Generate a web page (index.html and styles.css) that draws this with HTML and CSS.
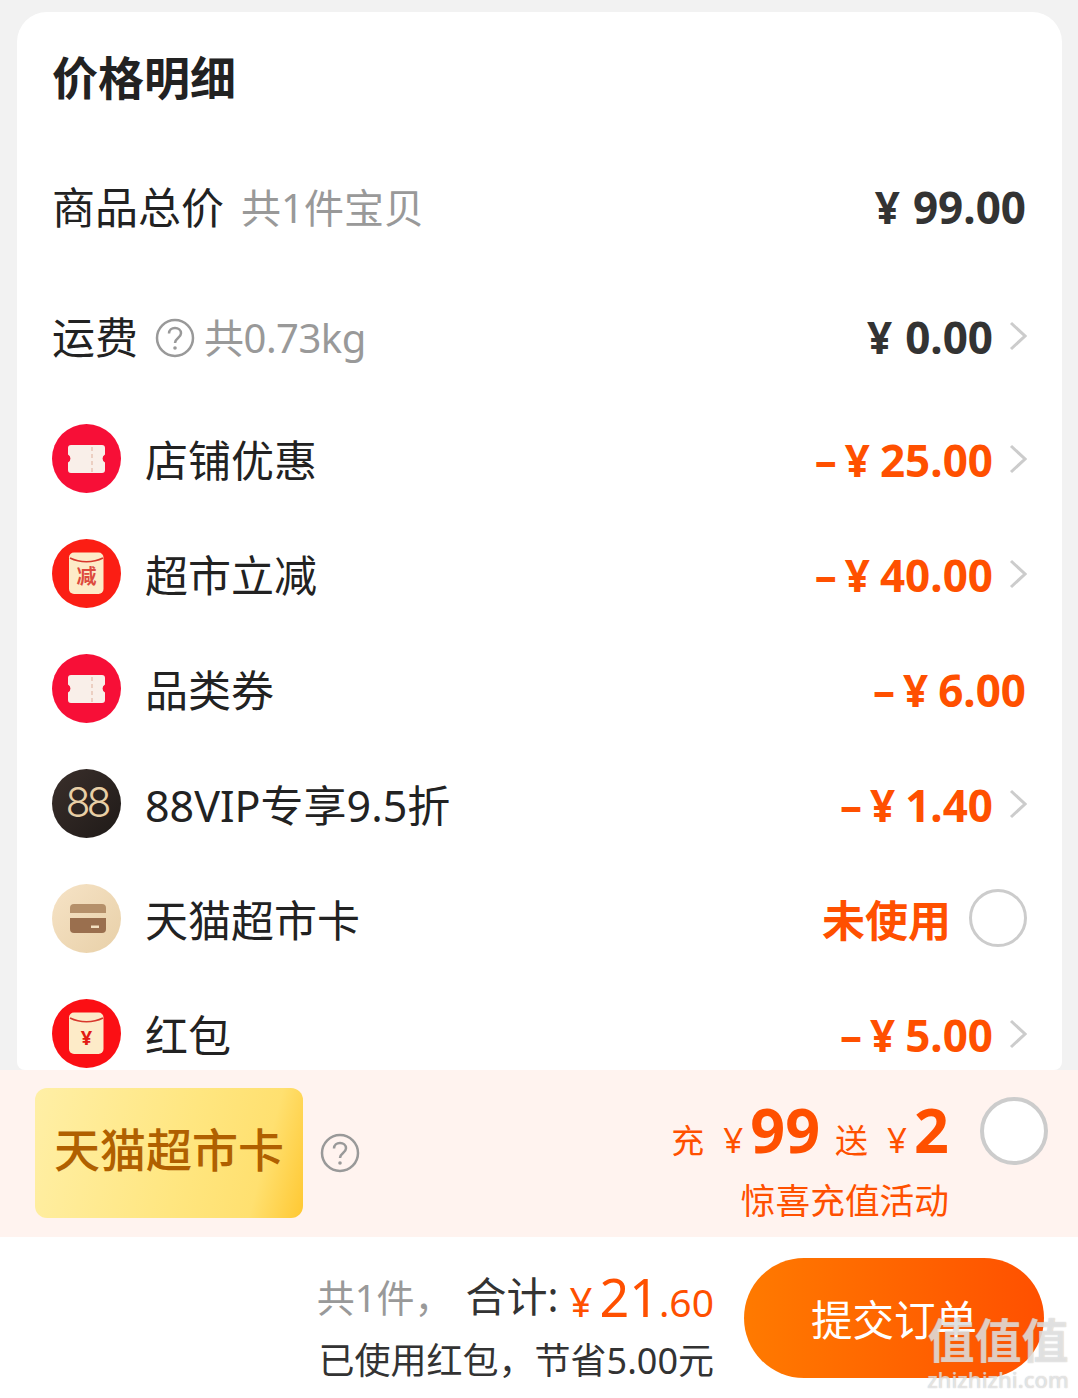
FILE: index.html

```html
<!DOCTYPE html>
<html lang="zh-CN">
<head>
    <meta charset="UTF-8">
    <title>价格明细</title>
    <link rel="stylesheet" href="styles.css">
</head>
<body>
    <div class="page">
        <section class="card">
            <h1 class="title">价格明细</h1>

            <div class="row row-goods">
                <div class="row-left">
                    <span class="label">商品总价</span>
                    <span class="note note-goods">共1件宝贝</span>
                </div>
                <div class="amount"><span class="yen">¥</span>99.00</div>
            </div>

            <div class="row row-ship">
                <div class="row-left">
                    <span class="label">运费</span>
                    <svg class="help" viewBox="0 0 40 40"><circle cx="20" cy="20" r="18" /><path d="M14 15.500c0-3.500 2.700-5.500 6-5.500s6 2.200 6 5.300c0 4.700-6 4.700-6 9.700" /><circle class="help-dot" cx="20" cy="30" r="1.800" /></svg>
                    <span class="note note-ship">共0.73kg</span>
                </div>
                <div class="row-right">
                    <div class="amount"><span class="yen">¥</span>0.00</div>
                    <svg class="chevron" viewBox="0 0 18 30"><path d="M2 2l14 13L2 28" /></svg>
                </div>
            </div>

            <div class="row row-item">
                <div class="row-left">
                    <svg class="icon" viewBox="0 0 69 69"><circle cx="34.500" cy="34.500" r="34.500" fill="#f70f37" /><path d="M19 21h31a3 3 0 0 1 3 3v6.500a4.500 4.500 0 0 0 0 8V46a3 3 0 0 1-3 3H19a3 3 0 0 1-3-3v-7.500a4.500 4.500 0 0 0 0-8V24a3 3 0 0 1 3-3z" fill="#f9efe9" /><path d="M40 23v25" stroke="#eccfc2" stroke-width="2" stroke-dasharray="4 3" /></svg>
                    <span class="label label-item">店铺优惠</span>
                </div>
                <div class="row-right">
                    <div class="amount amount-off"><span class="minus">–</span><span class="yen yen-off">¥</span>25.00</div>
                    <svg class="chevron" viewBox="0 0 18 30"><path d="M2 2l14 13L2 28" /></svg>
                </div>
            </div>

            <div class="row row-item">
                <div class="row-left">
                    <svg class="icon" viewBox="0 0 69 69"><circle cx="34.500" cy="34.500" r="34.500" fill="#fb1e14" /><rect x="17" y="13.500" width="34.500" height="41.500" rx="5" fill="#fdebc8" /><path d="M18 19c10 5 23 5 33 0" fill="none" stroke="#d8372c" stroke-width="1.500" /><text class="icon-char" x="34.500" y="45" fill="#dd4a3e">减</text></svg>
                    <span class="label label-item">超市立减</span>
                </div>
                <div class="row-right">
                    <div class="amount amount-off"><span class="minus">–</span><span class="yen yen-off">¥</span>40.00</div>
                    <svg class="chevron" viewBox="0 0 18 30"><path d="M2 2l14 13L2 28" /></svg>
                </div>
            </div>

            <div class="row row-item">
                <div class="row-left">
                    <svg class="icon" viewBox="0 0 69 69"><circle cx="34.500" cy="34.500" r="34.500" fill="#f70f37" /><path d="M19 21h31a3 3 0 0 1 3 3v6.500a4.500 4.500 0 0 0 0 8V46a3 3 0 0 1-3 3H19a3 3 0 0 1-3-3v-7.500a4.500 4.500 0 0 0 0-8V24a3 3 0 0 1 3-3z" fill="#f9efe9" /><path d="M40 23v25" stroke="#eccfc2" stroke-width="2" stroke-dasharray="4 3" /></svg>
                    <span class="label label-item">品类券</span>
                </div>
                <div class="amount amount-off"><span class="minus">–</span><span class="yen yen-off">¥</span>6.00</div>
            </div>

            <div class="row row-item">
                <div class="row-left">
                    <div class="icon icon-vip">88</div>
                    <span class="label label-item">88VIP专享9.5折</span>
                </div>
                <div class="row-right">
                    <div class="amount amount-off"><span class="minus">–</span><span class="yen yen-off">¥</span>1.40</div>
                    <svg class="chevron" viewBox="0 0 18 30"><path d="M2 2l14 13L2 28" /></svg>
                </div>
            </div>

            <div class="row row-item">
                <div class="row-left">
                    <svg class="icon" viewBox="0 0 69 69"><defs><linearGradient id="tan" x1="0" y1="0" x2="1" y2="1"><stop offset="0" stop-color="#f6e3c6" /><stop offset="1" stop-color="#e8d0a8" /></linearGradient></defs><circle cx="34.500" cy="34.500" r="34.500" fill="url(#tan)" /><path d="M18 29v-5a4 4 0 0 1 4-4h28a4 4 0 0 1 4 4v5z" fill="#b5906a" /><path d="M18 34h36v11a4 4 0 0 1-4 4H22a4 4 0 0 1-4-4z" fill="#9a6f4e" /><rect x="39" y="41.500" width="8" height="2.500" fill="#f3dfc0" /></svg>
                    <span class="label label-item">天猫超市卡</span>
                </div>
                <div class="row-right">
                    <span class="unused">未使用</span>
                    <span class="radio radio-small"></span>
                </div>
            </div>

            <div class="row row-item">
                <div class="row-left">
                    <svg class="icon" viewBox="0 0 69 69"><circle cx="34.500" cy="34.500" r="34.500" fill="#fb0f14" /><rect x="17" y="13.500" width="34.500" height="41.500" rx="5" fill="#fdebc8" /><path d="M18 19c10 5 23 5 33 0" fill="none" stroke="#d8372c" stroke-width="1.500" /><text class="icon-char" x="34.500" y="46" fill="#e21a14">¥</text></svg>
                    <span class="label label-item">红包</span>
                </div>
                <div class="row-right">
                    <div class="amount amount-off"><span class="minus">–</span><span class="yen yen-off">¥</span>5.00</div>
                    <svg class="chevron" viewBox="0 0 18 30"><path d="M2 2l14 13L2 28" /></svg>
                </div>
            </div>
        </section>

        <section class="promo">
            <div class="promo-left">
                <div class="promo-card">天猫超市卡</div>
                <svg class="help help-promo" viewBox="0 0 40 40"><circle cx="20" cy="20" r="18" /><path d="M14 15.500c0-3.500 2.700-5.500 6-5.500s6 2.200 6 5.300c0 4.700-6 4.700-6 9.700" /><circle class="help-dot" cx="20" cy="30" r="1.800" /></svg>
            </div>
            <div class="promo-right">
                <div class="promo-text">
                    <div class="promo-line">
                        <span class="promo-small">充</span>
                        <span class="promo-yen">¥</span>
                        <span class="promo-big">99</span>
                        <span class="promo-small promo-gap">送</span>
                        <span class="promo-yen">¥</span>
                        <span class="promo-big">2</span>
                    </div>
                    <div class="promo-sub">惊喜充值活动</div>
                </div>
                <span class="radio"></span>
            </div>
        </section>

        <footer class="bar">
            <div class="summary">
                <div class="total">
                    <span class="count">共1件，</span>
                    <span class="sum-label">合计:</span>
                    <span class="sum-yen">¥</span><span class="sum-int">21</span><span class="sum-dec">.60</span>
                </div>
                <div class="saved">已使用红包，节省5.00元</div>
            </div>
            <button class="submit">提交订单</button>
        </footer>

        <div class="watermark">
            <div class="wm-char">值值值</div>
            <div class="wm-site">zhizhizhi.com</div>
        </div>
    </div>
</body>
</html>
```

FILE: styles.css

```css
* {
    box-sizing: border-box;
}

body {
    margin: 0;
    background-color: #f2f2f2;
    font-family: "Noto Sans", "Noto Sans CJK SC", sans-serif;
    color: #222;
}

.page {
    position: relative;
    width: 1078px;
    height: 1398px;
    overflow: hidden;
    padding-top: 12px;
}

.card {
    height: 1058px;
    margin: 0 16px 0 17px;
    padding: 0 36px 0 35px;
    background-color: #fff;
    border-radius: 30px 30px 8px 8px;
    overflow: hidden;
}

.title {
    height: 134px;
    margin: 0;
    font-size: 46px;
    font-weight: 700;
    line-height: 131px;
    color: #222;
}

.row {
    display: flex;
    align-items: center;
    justify-content: space-between;
}

.row-goods {
    height: 123px;
}

.row-ship {
    height: 134px;
    padding-top: 3px;
}

.row-item {
    height: 115px;
}

.row-left,
.row-right {
    display: flex;
    align-items: center;
}

.label {
    font-size: 43px;
    line-height: 1.2;
}

.label-item {
    margin-left: 24px;
}

.note {
    margin-left: 9px;
    font-size: 40px;
    line-height: 1.2;
    color: #999;
}

.note-goods {
    margin-left: 17px;
}

.note-ship {
    letter-spacing: -0.5px;
}

.help {
    width: 40px;
    height: 40px;
    margin-left: 17px;
    fill: none;
    stroke: #999;
    stroke-width: 2.500;
}

.help-dot {
    fill: #999;
    stroke: none;
}

.amount {
    font-size: 44px;
    font-weight: 700;
    line-height: 1.2;
    color: #333;
    white-space: nowrap;
}

.amount-off {
    color: #ff5000;
}

.yen {
    margin-right: 13px;
}

.yen-off {
    margin-right: 10px;
}

.minus {
    margin-right: 8px;
}

.chevron {
    width: 18px;
    height: 30px;
    margin: 0 -1px 3px 16px;
    fill: none;
    stroke: #ccc;
    stroke-width: 3;
}

.icon {
    display: block;
    flex: none;
    width: 69px;
    height: 69px;
    margin-bottom: 4px;
}

.icon-char {
    font-size: 20px;
    font-weight: 700;
    text-anchor: middle;
}

.icon-vip {
    border-radius: 50%;
    background: linear-gradient(135deg, #3a2f2b, #1f1a18);
    color: #e8cfa6;
    font-family: "Inter", sans-serif;
    font-size: 41px;
    font-weight: 300;
    letter-spacing: -4px;
    line-height: 67px;
    text-align: center;
}

.unused {
    font-size: 43px;
    font-weight: 700;
    line-height: 1.2;
    color: #ff5000;
}

.radio {
    display: block;
    flex: none;
    width: 68px;
    height: 68px;
    background-color: #fff;
    border: 4px solid #ccc;
    border-radius: 50%;
}

.radio-small {
    width: 58px;
    height: 58px;
    margin: 0 -1px 5px 18px;
    border-width: 3px;
}

.promo {
    display: flex;
    align-items: flex-start;
    justify-content: space-between;
    height: 167px;
    padding: 18px 30px 0 35px;
    background-color: #fff3ef;
}

.promo-left {
    display: flex;
    align-items: center;
}

.promo-card {
    width: 268px;
    height: 130px;
    border-radius: 12px;
    background: linear-gradient(105deg, #ffefa6 0%, #ffe680 55%, #ffe070 82%, #ffc832 100%);
    color: #b06000;
    font-size: 46px;
    font-weight: 500;
    line-height: 122px;
    text-align: center;
}

.help-promo {
    margin-left: 17px;
}

.promo-right {
    display: flex;
    align-items: flex-start;
}

.promo-text {
    display: flex;
    flex-direction: column;
    align-items: flex-end;
    margin-right: 31px;
}

.promo-line {
    display: flex;
    align-items: baseline;
    height: 86px;
    color: #ff5000;
    white-space: nowrap;
}

.promo-small {
    font-size: 33px;
}

.promo-gap {
    margin-left: 15px;
}

.promo-yen {
    margin-left: 19px;
    font-size: 35px;
}

.promo-big {
    margin-left: 7px;
    font-size: 61px;
    font-weight: 700;
}

.promo-sub {
    margin-top: 6px;
    font-size: 34.700px;
    line-height: 1.2;
    color: #ff5000;
}

.promo-right > .radio {
    margin-top: 9px;
}

.bar {
    display: flex;
    align-items: flex-start;
    justify-content: flex-end;
    height: 161px;
    padding: 21px 34px 0 0;
    background-color: #fff;
}

.summary {
    display: flex;
    flex-direction: column;
    align-items: flex-end;
    margin-right: 30px;
}

.total {
    display: flex;
    align-items: baseline;
    height: 70px;
    margin-top: 3px;
    white-space: nowrap;
}

.count,
.sum-label {
    transform: translateY(-5px);
}

.count {
    font-size: 38px;
    color: #999;
}

.sum-label {
    margin-left: 13px;
    font-size: 41px;
    color: #333;
}

.sum-yen {
    margin-left: 11px;
    font-size: 40px;
    color: #ff5000;
}

.sum-int {
    margin-left: 7px;
    font-size: 52px;
    color: #ff5000;
}

.sum-dec {
    font-size: 39px;
    color: #ff5000;
}

.saved {
    margin-top: 8px;
    font-size: 36px;
    line-height: 1.2;
    color: #333;
}

.submit {
    width: 300px;
    height: 120px;
    padding: 0;
    border: none;
    border-radius: 60px;
    background: linear-gradient(90deg, #ff7a00, #ff5000);
    color: #fff;
    font-family: inherit;
    font-size: 41.500px;
}

.watermark {
    position: absolute;
    right: 8px;
    bottom: 6px;
    width: 144px;
    text-align: center;
    color: rgba(255, 255, 255, 0.6);
    text-shadow: 0 0 1px rgba(150, 150, 150, 0.7);
}

.wm-char {
    font-size: 47px;
    font-weight: 700;
    line-height: 52px;
    white-space: nowrap;
}

.wm-site {
    font-size: 22px;
    font-weight: 500;
    line-height: 26px;
}
```
